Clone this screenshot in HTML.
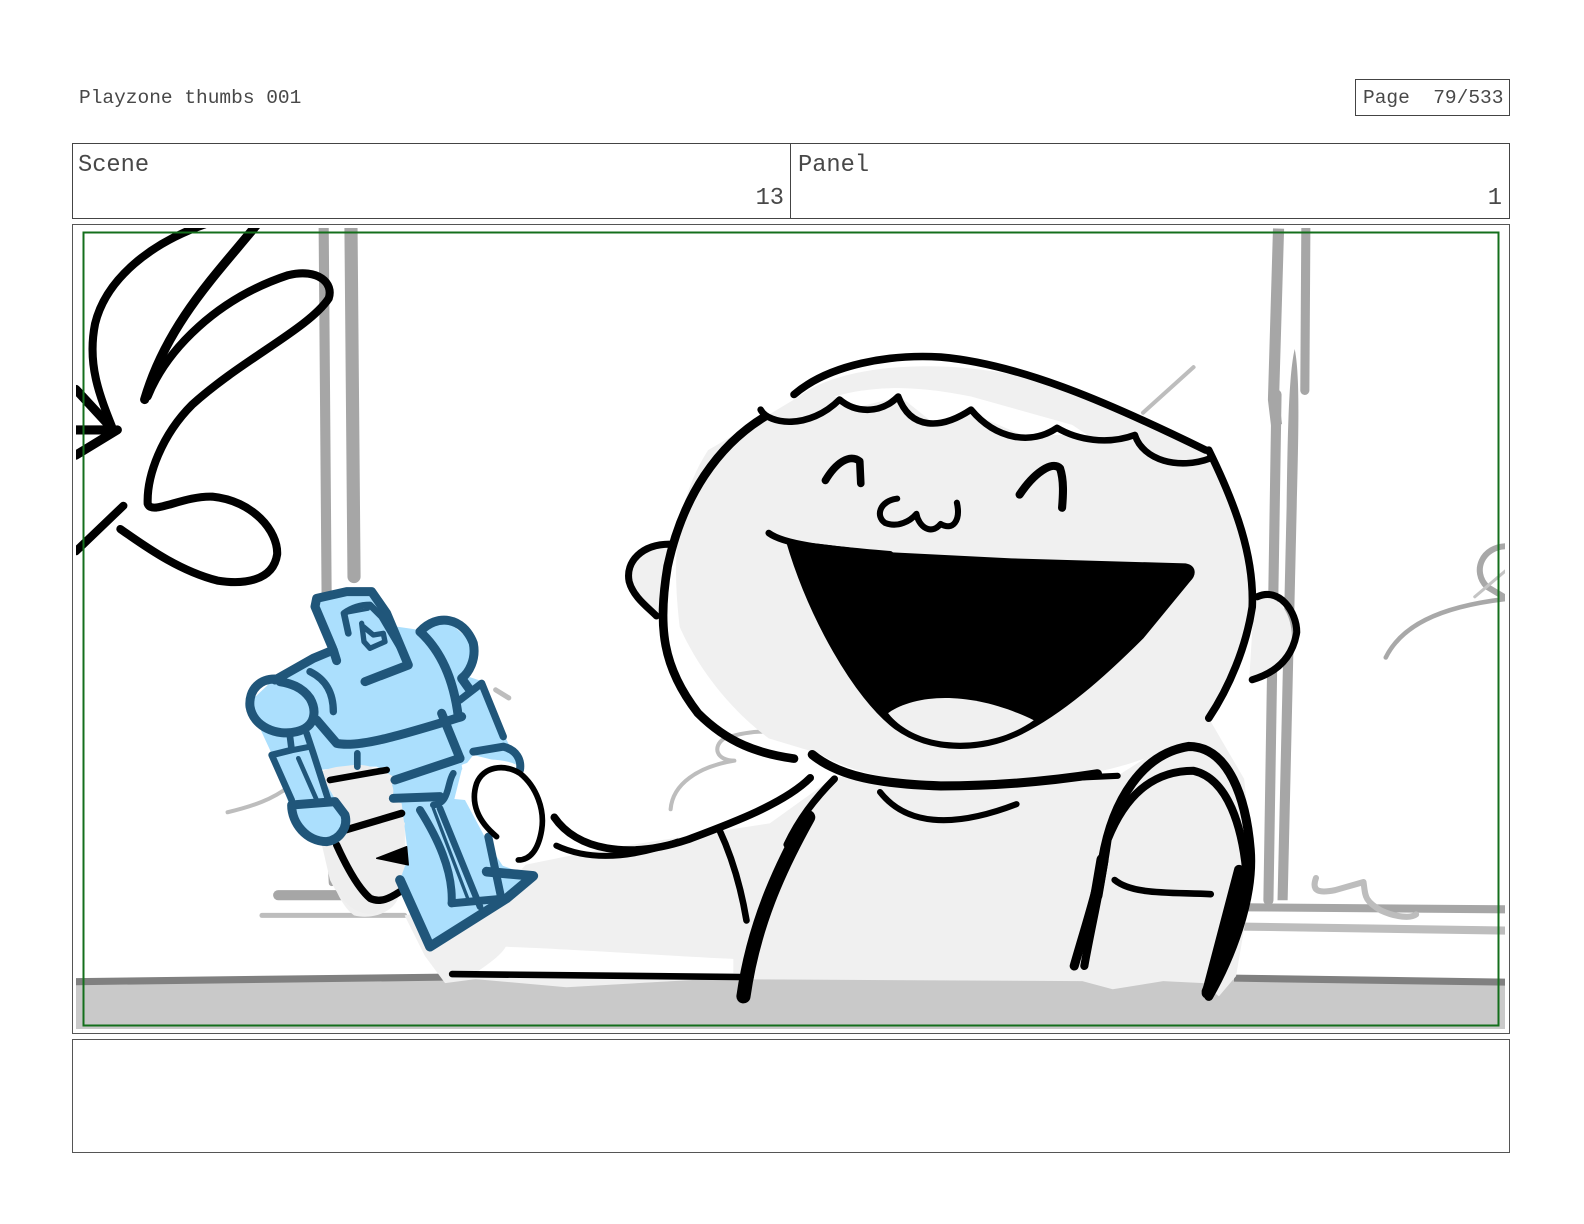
<!DOCTYPE html>
<html><head><meta charset="utf-8"><style>
html,body{margin:0;padding:0;background:#fff;width:1584px;height:1224px;overflow:hidden}
svg{display:block}
text{font-family:"Liberation Mono",monospace;fill:#484848}
</style></head><body>
<svg width="1584" height="1224" viewBox="0 0 1584 1224" xmlns="http://www.w3.org/2000/svg">
<defs><clipPath id="c"><rect x="76" y="228" width="1429" height="801"/></clipPath></defs>
<rect width="1584" height="1224" fill="#fff"/>
<text x="79" y="103" font-size="19.5">Playzone thumbs 001</text>
<rect x="1355.500" y="79.500" width="154" height="36" fill="none" stroke="#444"/>
<text x="1363" y="103" font-size="19.5" xml:space="preserve">Page  79/533</text>
<rect x="72.500" y="143.500" width="1437" height="75" fill="none" stroke="#444"/>
<line x1="790.500" y1="143" x2="790.500" y2="218" stroke="#444"/>
<text x="78" y="171" font-size="23.7">Scene</text>
<text x="798" y="171" font-size="23.7">Panel</text>
<text x="784" y="204" font-size="23.7" text-anchor="end">13</text>
<text x="1502" y="204" font-size="23.7" text-anchor="end">1</text>
<rect x="72.500" y="224.500" width="1437" height="809" fill="none" stroke="#555"/>
<rect x="72.500" y="1039.500" width="1437" height="113" fill="none" stroke="#555"/>

<g clip-path="url(#c)">
<g transform="scale(1.0115)" fill="none" stroke-linecap="round" stroke-linejoin="round">
<!-- background -->
<g stroke="#a6a6a6">
<path d="M320 226L323 600" stroke-width="10"/>
<path d="M347 226L350 570" stroke-width="13"/>
<path d="M327 850L328 873" stroke-width="6"/>
<path d="M275 885L345 885" stroke-width="10"/>
<path d="M1264 226L1259 395L1262 420" stroke-width="11" stroke-linecap="butt"/>
<path d="M1262 390L1254 890" stroke-width="10"/>
<path d="M1291 226L1290 386" stroke-width="9"/>
<path d="M1232 897L1490 899" stroke-width="8" stroke-linecap="butt"/>
</g>
<path d="M1280 345C1285 370 1284 420 1282 500L1273 890L1263 890L1272 500C1273 430 1274 370 1280 345Z" fill="#a6a6a6"/>
<g stroke="#bdbdbd">
<path d="M259 905L400 905" stroke-width="5"/>
<path d="M1225 916L1490 920" stroke-width="8" stroke-linecap="butt"/>
<path d="M1301 868C1296 882 1305 883 1320 880L1348 872C1350 885 1348 890 1365 900C1380 907 1395 908 1400 904" stroke-width="6"/>
<path d="M1180 363L1130 408" stroke-width="4"/>
<path d="M1115 420L1105 428" stroke-width="4"/>
<path d="M225 803C250 797 270 790 285 778" stroke-width="4"/>
<path d="M663 800C665 775 690 758 726 752C708 752 704 738 716 730C735 724 750 722 765 724" stroke-width="4"/>
<path d="M490 682L503 690" stroke-width="5"/>
</g>
<g stroke="#a8a8a8">
<path d="M1370 650C1385 620 1420 600 1490 592" stroke-width="4.500"/>
<path d="M1490 540C1465 540 1455 565 1470 580L1490 592" stroke-width="6"/>
<path d="M1458 590L1490 563" stroke-width="3" stroke="#c4c4c4"/>
</g>
<path d="M75 970L75 1018L1490 1018L1490 970L1200 968L440 968Z" fill="#c9c9c9"/>
<path d="M75 970.500L440 966" stroke="#808080" stroke-width="7" stroke-linecap="butt"/>
<path d="M1220 967L1490 971" stroke="#808080" stroke-width="7" stroke-linecap="butt"/>

<!-- fills -->
<path d="M825 768L761 814L593 840L514 856L480 890L400 905L420 945L440 972L470 968L560 976L700 968L1070 970L1100 978L1150 970L1190 972L1205 985L1222 965L1240 860L1230 770L1195 710L1100 770Z" fill="#f0f0f0"/>
<path d="M500 936C560 938 660 945 725 948L725 962L470 962C480 955 495 945 500 936Z" fill="#fff"/>
<path d="M760 410L790 392C830 360 940 350 1040 380C1100 400 1160 430 1195 450C1225 510 1238 570 1235 600C1232 650 1215 690 1195 715C1140 760 1060 770 990 775C920 778 850 770 810 745L760 730C720 700 690 660 672 620C665 560 665 500 700 445Z" fill="#f0f0f0"/>
<path d="M825 392C860 382 900 380 960 392L1060 420L1075 430L1010 430L960 408L925 420L890 392L850 402Z" fill="#fff"/>
<path d="M622 565C625 548 640 540 662 538L652 610C635 595 622 585 622 565Z" fill="#f0f0f0"/>
<path d="M1240 592C1265 583 1282 610 1276 645C1265 660 1250 668 1235 672Z" fill="#f0f0f0"/>
<path d="M325 770L385 762C402 790 405 830 395 880C395 900 370 910 350 905C330 890 322 850 320 830Z" fill="#f0f0f0"/>
<path d="M466 800C462 770 490 745 515 765C540 795 545 830 515 860C490 855 470 830 466 800Z" fill="#fff"/>

<!-- black line art -->
<g stroke="#000" stroke-width="8">
<path d="M202 222C150 240 105 275 94 320C86 360 98 390 112 425"/>
<path d="M254 222C215 270 165 320 143 395" stroke-width="9"/>
<path d="M146 392C165 345 215 295 285 272C315 265 330 280 325 295C305 325 240 355 190 400C160 430 145 470 146 498C150 510 180 490 210 491C250 495 275 525 274 548C270 575 240 578 215 574C180 565 150 545 119 523"/>
<path d="M75 385L112 425L75 425M116 425L75 450" stroke-width="9"/>
<path d="M75 545L122 500" stroke-width="8"/>
<!-- head -->
<path d="M756 412C710 440 675 490 660 560C650 620 655 660 690 705C720 735 750 745 785 750" stroke-width="8.500"/>
<path d="M1195 445C1222 500 1240 550 1238 600C1232 640 1215 680 1195 710" stroke-width="7.500"/>
<path d="M785 390C820 360 880 350 930 353C1010 360 1100 400 1192 445" stroke-width="7.500"/>
<path d="M752 405C760 420 800 425 830 395C845 408 870 410 888 392C900 425 930 425 960 405C985 435 1020 440 1045 423C1065 435 1095 440 1122 430C1130 455 1165 465 1197 453" stroke-width="6.500"/>
<path d="M816 475C826 458 840 448 850 456L851 478" stroke-width="7.500"/>
<path d="M1008 489C1022 468 1040 455 1048 463C1052 475 1051 490 1050 502" stroke-width="8"/>
<path d="M887 493C870 495 865 510 875 517C888 522 900 515 906 508C908 520 920 530 930 518C942 525 950 515 946 497" stroke-width="6"/>
<path d="M760 527C775 538 810 542 880 548" stroke-width="6.500"/>
<path d="M662 538C635 538 618 555 622 575C626 590 640 600 649 609" stroke-width="7"/>
<path d="M1243 590C1265 580 1282 605 1282 625C1278 650 1262 665 1238 672" stroke-width="7"/>
<path d="M803 746C830 768 870 775 930 777C990 777 1040 772 1085 765" stroke-width="9"/>
<path d="M1040 770L1105 767" stroke-width="6"/>
<path d="M870 783C895 815 940 820 1005 795" stroke-width="6"/>
<!-- arms/body -->
<path d="M1062 955C1075 910 1085 880 1090 850C1100 790 1130 745 1175 738C1215 738 1232 790 1236 840C1240 890 1215 950 1195 985" stroke-width="9"/>
<path d="M1072 955C1080 910 1088 880 1095 830C1115 780 1145 762 1180 762C1215 770 1228 820 1232 860C1225 900 1205 950 1192 980" stroke-width="8"/>
<path d="M1193 982L1225 860" stroke-width="10"/>
<path d="M1102 870C1120 885 1160 882 1197 884" stroke-width="6.500"/>
<path d="M1090 850L1084 885" stroke-width="12"/>
<path d="M548 808C570 840 620 850 680 830C720 815 775 795 801 769" stroke-width="7.500"/>
<path d="M550 836C580 850 620 850 670 832" stroke-width="6"/>
<path d="M711 820C725 850 733 880 738 910" stroke-width="6.500"/>
<path d="M825 770C805 790 790 810 778 835" stroke-width="7"/>
<path d="M799 808C770 860 745 915 735 985" stroke-width="14"/>
<path d="M447 963L742 966" stroke-width="6.500"/>
</g>
<!-- mouth -->
<path d="M778 535L880 547L1000 553L1172 558C1182 560 1182 568 1176 574L1130 630C1090 670 1050 705 1010 725C970 745 920 745 885 720C845 690 800 610 778 535Z" fill="#000" stroke="#000" stroke-width="2"/>
<path d="M878 705C905 686 960 682 1022 712C990 735 950 737 925 732C905 728 888 718 878 705Z" fill="#f0f0f0"/>
</g>

<!-- robot -->
<g transform="translate(220 570) scale(.3333)" stroke-linecap="round" stroke-linejoin="round" fill="none">
<path d="M285 90L450 58L530 170L600 180L680 150L760 220L745 320L790 335L860 510L900 590L760 555L725 600L700 700L800 870L940 920L630 1130L540 930L565 860L545 700L510 690L520 620L470 590L400 590L295 600L370 730L350 800L290 815L220 740L150 540L85 400L170 320L330 235L305 190Z" fill="#abdffd"/>
<path d="M400 585C470 580 515 620 520 660C520 700 505 700 520 710L555 760C550 790 545 870 560 890L540 950L470 1030C420 1040 370 1010 330 930L300 800L370 790L380 720L295 610C330 590 360 590 400 585Z" fill="#eee"/>
<path d="M725 585C770 565 850 560 900 590L930 800L860 880L810 830L745 700Z" fill="#fff"/>
<path d="M560 690L630 680L735 690L810 830L850 890L940 920L630 1130L540 930L565 860Z" fill="#abdffd"/>
<path d="M330 630L500 600" stroke="#000" stroke-width="20"/>
<path d="M360 785L545 730" stroke="#000" stroke-width="22"/>
<path d="M350 825C375 880 410 950 450 985C480 1000 510 985 540 965" stroke="#000" stroke-width="22"/>
<path d="M470 865L560 830L565 885Z" fill="#000" stroke="#000" stroke-width="4"/>
<g stroke="#20567a" stroke-width="27">
<path d="M435 335L565 285L500 130L455 65L380 65L290 85L285 110L338 235"/>
<path d="M385 190L372 130C400 110 430 105 450 105L485 140L550 250" stroke-width="20"/>
<path d="M380 130L445 118" stroke-width="9"/>
<path d="M425 160L432 215L450 235L495 215L490 190L460 195L430 170" stroke-width="16"/>
<path d="M165 330L280 265L340 240L350 272"/>
<path d="M270 305C320 330 340 370 340 425" stroke-width="22"/>
<path d="M180 328C120 320 85 360 90 410C100 470 170 500 230 485C290 470 290 420 270 385C245 350 210 340 180 335"/>
<path d="M290 450L350 520C420 535 560 490 725 440"/>
<path d="M600 185C660 240 700 320 715 440"/>
<path d="M600 185C650 130 730 140 760 220C770 270 745 310 725 325L750 360"/>
<path d="M720 390L785 340L850 500" stroke-width="22"/>
<path d="M760 545L850 530C890 540 905 570 900 600" stroke-width="24"/>
<path d="M665 430L720 565"/>
<path d="M525 630L720 565"/>
<path d="M412 550L412 590" stroke-width="20"/>
<path d="M210 500L215 540L155 555L215 690" stroke-width="20"/>
<path d="M260 490L280 550L325 690" stroke-width="20"/>
<path d="M220 540L270 530" stroke-width="18"/>
<path d="M235 565L290 690" stroke-width="14"/>
<path d="M215 705L345 695L375 735C385 770 360 810 320 815C260 815 215 760 215 705" fill="#abdffd"/>
<path d="M520 685L660 680"/>
<path d="M700 610C680 640 690 700 640 705" stroke-width="20"/>
<path d="M600 720C650 800 700 900 695 1000" stroke-width="24"/>
<path d="M640 715L745 990" stroke-width="10"/>
<path d="M660 715L780 1010" stroke-width="20"/>
<path d="M805 800L845 990" stroke-width="24"/>
<path d="M695 1000L860 985" stroke-width="24"/>
<path d="M800 905L940 918L860 985L630 1130L540 930" stroke-width="29"/>
</g>
<path d="M830 800C775 755 750 700 770 640C790 590 850 580 900 610C950 650 975 720 965 780C955 840 930 870 895 870" stroke="#000" stroke-width="17"/>
</g>
</g>
<rect x="83.500" y="232.500" width="1415" height="793" fill="none" stroke="#146f1c" stroke-width="2"/>
</svg>
</body></html>
